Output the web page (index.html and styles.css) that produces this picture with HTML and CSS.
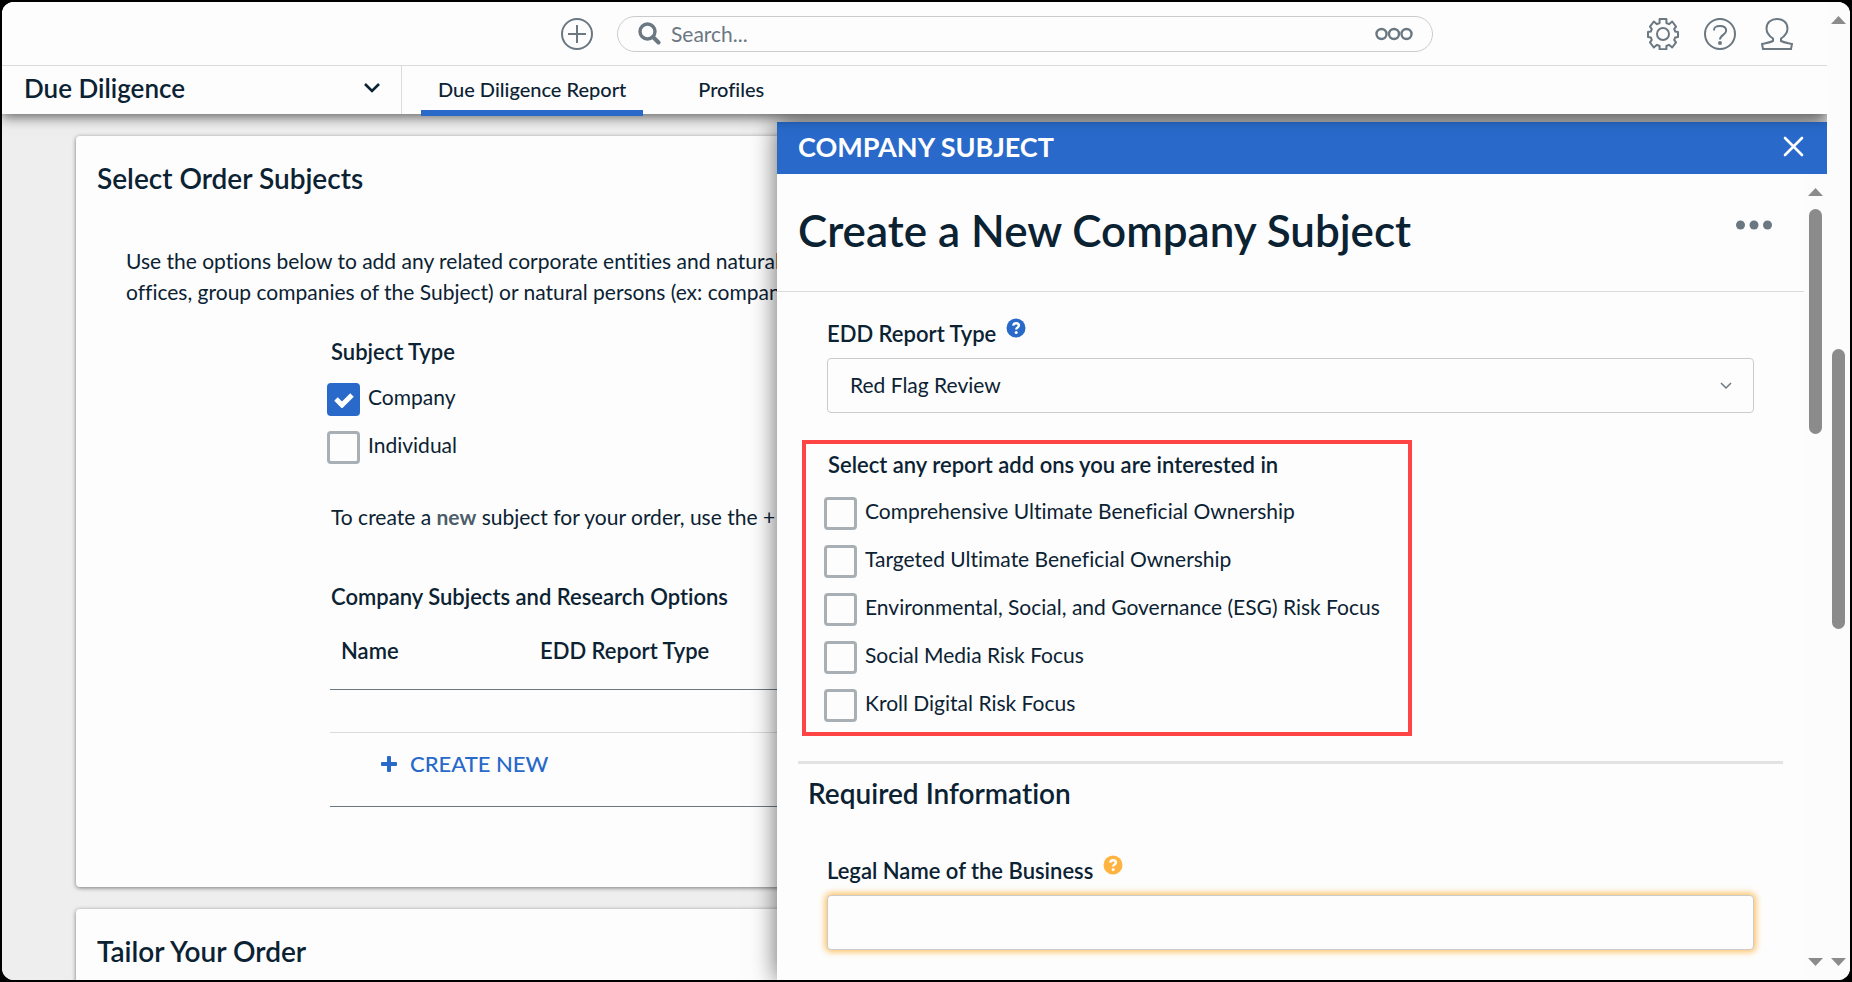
FILE: index.html
```
<!DOCTYPE html>
<html lang="en">
<head>
    <meta charset="UTF-8">
    <meta name="viewport" content="width=device-width, initial-scale=1.0">
    <title>Due Diligence Report</title>
    <link rel="stylesheet" href="styles.css">
</head>
<body>
    <div class="window">
        <div class="page">
            <header class="topbar">
                <button type="button" class="icon-btn" aria-label="Add">
                    <svg width="32" height="32" viewBox="0 0 32 32" fill="none" stroke="currentColor" stroke-width="2">
                        <circle cx="16" cy="16" r="15"/>
                        <path d="M16 7v18M7 16h18"/>
                    </svg>
                </button>
                <div class="search">
                    <svg width="23" height="23" viewBox="0 0 23 23" fill="none" stroke="currentColor">
                        <circle cx="9.5" cy="9.5" r="7.5" stroke-width="3.4"/>
                        <path d="M15 15l5.5 5.5" stroke-width="4" stroke-linecap="round"/>
                    </svg>
                    <input type="text" placeholder="Search..." aria-label="Search">
                    <button type="button" class="icon-btn" aria-label="Search options">
                        <svg width="38" height="14" viewBox="0 0 38 14" fill="none" stroke="currentColor" stroke-width="2.4">
                            <circle cx="6.5" cy="7" r="5"/>
                            <circle cx="19" cy="7" r="5"/>
                            <circle cx="31.5" cy="7" r="5"/>
                        </svg>
                    </button>
                </div>
                <div class="tools">
                    <button type="button" class="icon-btn" aria-label="Settings">
                        <svg width="32" height="32" viewBox="0 0 32 32" fill="none" stroke="currentColor" stroke-width="2" stroke-linejoin="round">
                            <path d="M12.6 1h6.800v4l2.600 1.200 3.200-2.700 3.800 5.200-1.800 2.500 1 2.300 2.800.6v4.800l-2.800.6-1 2.300 1.800 2.500-3.800 5.200-3.200-2.700-2.600 1.200v3.200h-6.800v-3.200L10 26.800l-3.200 2.700L3 24.300l1.800-2.500-1-2.300L1 18.900v-4.800l2.800-.6 1-2.300L3 8.700l3.800-5.200L10 6.200 12.600 5z"/>
                            <circle cx="16" cy="16" r="6"/>
                        </svg>
                    </button>
                    <button type="button" class="icon-btn" aria-label="Help">
                        <svg width="32" height="32" viewBox="0 0 32 32" fill="none" stroke="currentColor" stroke-width="2">
                            <circle cx="16" cy="16" r="15"/>
                            <path d="M10 12.5C10 8.500 12.500 8 16 8s6.200 1.500 6.200 4.600c0 4.300-6.200 4.300-6.200 9"/>
                            <circle cx="16" cy="25" r="1" fill="currentColor"/>
                        </svg>
                    </button>
                    <button type="button" class="icon-btn" aria-label="Account">
                        <svg width="32" height="32" viewBox="0 0 32 32" fill="none" stroke="currentColor" stroke-width="2">
                            <path d="M12 23v-2.500C8 18 5.500 15 5.500 10.500 5.500 4.500 10 1 16 1s10.500 3.500 10.500 9.500C26.500 15 24 18 20 20.500V23c3 1.500 7 2 11 3l-1 5H2l-1-5c4-1 8-1.500 11-3z"/>
                        </svg>
                    </button>
                </div>
            </header>

            <nav class="navbar">
                <button type="button" class="app-menu">
                    Due Diligence
                    <svg width="16" height="10" viewBox="0 0 16 10" fill="none" stroke="currentColor" stroke-width="2.6">
                        <path d="M1 1l7 7 7-7"/>
                    </svg>
                </button>
                <a href="#report" class="tab active">Due Diligence Report</a>
                <a href="#profiles" class="tab">Profiles</a>
            </nav>

            <main class="content">
                <section class="card card-collapsed"></section>

                <section class="card" id="report">
                    <h2>Select Order Subjects</h2>
                    <p class="intro">Use the options below to add any related corporate entities and natural persons<br>
                        offices, group companies of the Subject) or natural persons (ex: company directors)</p>

                    <div class="subjects">
                        <fieldset>
                            <legend>Subject Type</legend>
                            <label class="check"><input type="checkbox" checked>Company</label>
                            <label class="check"><input type="checkbox">Individual</label>
                        </fieldset>

                        <p class="hint">To create a <strong>new</strong> subject for your order, use the + button</p>

                        <h3>Company Subjects and Research Options</h3>
                        <table>
                            <thead>
                                <tr><th class="col-name">Name</th><th>EDD Report Type</th></tr>
                            </thead>
                            <tbody>
                                <tr class="empty"><td colspan="2"></td></tr>
                                <tr class="create">
                                    <td colspan="2">
                                        <a href="#company-subject">
                                            <svg width="16" height="16" viewBox="0 0 16 16" fill="currentColor">
                                                <rect x="6" y="0" width="4" height="16" rx="1"/>
                                                <rect x="0" y="6" width="16" height="4" rx="1"/>
                                            </svg>
                                            CREATE NEW
                                        </a>
                                    </td>
                                </tr>
                            </tbody>
                        </table>
                    </div>
                </section>

                <section class="card">
                    <h2>Tailor Your Order</h2>
                </section>
            </main>

            <aside class="panel" id="company-subject">
                <div class="panel-header">
                    <h2>COMPANY SUBJECT</h2>
                    <button type="button" class="icon-btn close" aria-label="Close">
                        <svg width="21" height="21" viewBox="0 0 21 21" fill="none" stroke="currentColor" stroke-width="2.6" stroke-linecap="round">
                            <path d="M2 2l17 17M19 2L2 19"/>
                        </svg>
                    </button>
                </div>
                <div class="panel-body">
                    <div class="panel-scroll">
                        <div class="panel-title">
                            <h1>Create a New Company Subject</h1>
                            <button type="button" class="icon-btn" aria-label="More actions">
                                <svg width="36" height="10" viewBox="0 0 36 10" fill="currentColor">
                                    <circle cx="4.5" cy="5" r="4.5"/>
                                    <circle cx="18" cy="5" r="4.5"/>
                                    <circle cx="31.5" cy="5" r="4.5"/>
                                </svg>
                            </button>
                        </div>

                        <form>
                            <div class="form-group">
                                <label for="reportType">EDD Report Type
                                    <svg class="help" width="20" height="20" viewBox="0 0 20 20" fill="none">
                                        <circle cx="10" cy="10" r="9.5" fill="currentColor"/>
                                        <path d="M7.2 7.600C7.500 5.900 8.700 5.200 10.100 5.200c1.600 0 2.800 1 2.800 2.300 0 2-2.700 2-2.700 4" stroke="#fff" stroke-width="2.4"/>
                                        <circle cx="10.2" cy="14.6" r="1.5" fill="#fff"/>
                                    </svg>
                                </label>
                                <select id="reportType">
                                    <option>Red Flag Review</option>
                                </select>
                            </div>

                            <fieldset class="addons">
                                <legend>Select any report add ons you are interested in</legend>
                                <label class="check"><input type="checkbox">Comprehensive Ultimate Beneficial Ownership</label>
                                <label class="check"><input type="checkbox">Targeted Ultimate Beneficial Ownership</label>
                                <label class="check"><input type="checkbox">Environmental, Social, and Governance (ESG) Risk Focus</label>
                                <label class="check"><input type="checkbox">Social Media Risk Focus</label>
                                <label class="check"><input type="checkbox">Kroll Digital Risk Focus</label>
                            </fieldset>

                            <hr>
                            <h2>Required Information</h2>

                            <div class="form-group required">
                                <label for="legalName">Legal Name of the Business
                                    <svg class="help" width="20" height="20" viewBox="0 0 20 20" fill="none">
                                        <circle cx="10" cy="10" r="9.5" fill="currentColor"/>
                                        <path d="M7.2 7.600C7.500 5.900 8.700 5.200 10.100 5.200c1.600 0 2.800 1 2.800 2.300 0 2-2.700 2-2.700 4" stroke="#fff" stroke-width="2.4"/>
                                        <circle cx="10.2" cy="14.6" r="1.5" fill="#fff"/>
                                    </svg>
                                </label>
                                <input type="text" id="legalName">
                            </div>
                        </form>
                    </div>
                    <div class="scrollbar panel-scrollbar">
                        <span class="arrow-up"></span>
                        <div class="track"><div class="thumb"></div></div>
                        <span class="arrow-down"></span>
                    </div>
                </div>
            </aside>
        </div>

        <div class="scrollbar page-scrollbar">
            <span class="arrow-up"></span>
            <div class="track"><div class="thumb"></div></div>
            <span class="arrow-down"></span>
        </div>
    </div>
</body>
</html>
```
FILE: styles.css
```
* {
    box-sizing: border-box;
}

body {
    margin: 0;
    padding: 2px;
    height: 100vh;
    background-color: #000;
    color: #0b2233;
    font-family: Lato, "Open Sans", sans-serif;
    font-size: 21px;
    line-height: 31px;
    font-variant-ligatures: none;
}

h1, h2, h3, p, fieldset, legend {
    margin: 0;
    padding: 0;
    border: none;
}

h1 {
    font-size: 44px;
    line-height: 50px;
    font-weight: 600;
}

h2 {
    font-size: 28px;
    line-height: 36px;
    font-weight: 600;
}

h3, legend, th {
    font-size: 22px;
    line-height: 31px;
    font-weight: 600;
    text-align: left;
}

button, input, select {
    font-family: inherit;
    font-size: 21px;
    color: inherit;
}

.icon-btn {
    display: flex;
    padding: 0;
    border: none;
    background: none;
    color: #6b7882;
    cursor: pointer;
}

.window {
    display: flex;
    height: 100%;
    border-radius: 12px;
    overflow: hidden;
    background-color: #fdfdfd;
}

.page {
    flex: 1;
    min-width: 0;
    position: relative;
    display: flex;
    flex-direction: column;
    overflow: hidden;
    background-color: #eee;
}

/* Top bar */
.topbar {
    flex: none;
    display: flex;
    align-items: center;
    height: 64px;
    padding: 0 34px 0 559px;
    background-color: #fdfdfd;
    border-bottom: 1px solid #d9dbdd;
    position: relative;
    z-index: 3;
}

.search {
    flex: 1;
    max-width: 816px;
    height: 36px;
    margin-left: 24px;
    padding: 0 19px 0 20px;
    display: flex;
    align-items: center;
    gap: 10px;
    border: 1px solid #c9cbcd;
    border-radius: 18px;
    color: #6b7882;
}

.search input {
    flex: 1;
    min-width: 0;
    padding: 0;
    border: none;
    outline: none;
    background: none;
}

.search input::placeholder {
    color: #6b7882;
    opacity: 1;
}

.tools {
    display: flex;
    gap: 25px;
    margin-left: auto;
}

.navbar {
    flex: none;
    display: flex;
    height: 48px;
    background-color: #fdfdfd;
    box-shadow: 0 3px 12px rgba(0, 0, 0, 0.6);
    position: relative;
    z-index: 2;
}

.app-menu {
    width: 400px;
    display: flex;
    align-items: center;
    justify-content: space-between;
    margin-right: 19px;
    padding: 0 21px 4px 22px;
    border: none;
    border-right: 1px solid #d9dbdd;
    background: none;
    font-size: 26px;
    font-weight: 600;
    cursor: pointer;
}

.tab {
    height: 50px;
    margin-right: 38px;
    padding: 8px 17px 0;
    border-bottom: 6px solid transparent;
    color: #0b2233;
    font-size: 20px;
    font-weight: 500;
    text-decoration: none;
}

.tab.active {
    border-color: #2869c9;
}

/* Cards */
.content {
    display: flex;
    flex-direction: column;
    gap: 22px;
    padding: 0 73px 0 74px;
}

.card {
    flex: none;
    padding: 24px 21px 80px;
    background-color: #fdfdfd;
    border-radius: 4px;
    box-shadow: 0 1px 4px rgba(0, 0, 0, 0.5);
}

.card-collapsed {
    padding: 0;
}

.intro {
    margin: 49px 0 29px 29px;
    white-space: nowrap;
}

.subjects {
    margin-left: 234px;
}

legend {
    margin-bottom: 14px;
}

.check {
    display: flex;
    align-items: flex-start;
    gap: 8px;
    margin: 0 0 13px -4px;
}

.check input {
    appearance: none;
    flex: none;
    width: 33px;
    height: 33px;
    margin: 2px 0 0;
    border: 3px solid #a8afb5;
    border-radius: 4px;
    background-color: #fdfdfd;
}

.check input:checked {
    border-color: #2869c9;
    background: #2869c9 url("data:image/svg+xml,%3Csvg xmlns='http://www.w3.org/2000/svg' width='20' height='16' fill='none' stroke='white' stroke-width='5'%3E%3Cpath d='M2 7l6 6L18 3'/%3E%3C/svg%3E") no-repeat center;
}

.hint {
    margin: 24px 0 49px;
    white-space: nowrap;
}

.hint strong {
    font-weight: 700;
    color: #4d5d69;
}

table {
    width: 100%;
    margin-left: -1px;
    border-collapse: collapse;
}

th {
    padding: 23px 11px;
    border-bottom: 1px solid #6b7882;
}

.col-name {
    width: 199px;
}

.empty td {
    height: 43px;
    padding: 0;
    border-bottom: 1px solid #d9dbdd;
}

.create td {
    padding: 15px 51px 27px;
    border-bottom: 1px solid #6b7882;
}

.create a {
    display: flex;
    align-items: center;
    gap: 13px;
    color: #2869c9;
    font-size: 22px;
    font-weight: 500;
    text-decoration: none;
}

/* Slide-out panel */
.panel {
    position: absolute;
    top: 120px;
    right: 0;
    bottom: 0;
    width: calc(100% - 775px);
    display: flex;
    flex-direction: column;
    background-color: #fdfdfd;
    box-shadow: 0 0 24px rgba(0, 0, 0, 0.6);
    z-index: 1;
}

.panel-header {
    flex: none;
    display: flex;
    align-items: center;
    justify-content: space-between;
    height: 52px;
    padding: 0 23px 3px 21px;
    background-color: #2869c9;
    color: #fff;
}

.panel-header h2 {
    font-size: 27px;
    font-weight: 700;
}

.close {
    color: #fff;
}

.panel-body {
    flex: 1;
    min-height: 0;
    display: flex;
}

.panel-scroll {
    flex: 1;
    min-width: 0;
    overflow: hidden;
}

.panel-title {
    display: flex;
    align-items: flex-start;
    justify-content: space-between;
    padding: 31px 32px 36px 21px;
    border-bottom: 1px solid #d9dbdd;
}

.panel-title .icon-btn {
    margin-top: 15px;
}

form {
    padding-top: 26px;
}

.form-group {
    margin: 0 50px;
}

.form-group label {
    display: flex;
    gap: 10px;
    margin-bottom: 9px;
    font-size: 22px;
    font-weight: 600;
}

.help {
    color: #2869c9;
}

.form-group select,
.form-group input {
    display: block;
    width: 100%;
    height: 55px;
    padding: 0 22px 3px;
    border: 1px solid #c9cbcd;
    border-radius: 4px;
    background-color: #fdfdfd;
}

.form-group select {
    appearance: none;
    background-image: url("data:image/svg+xml,%3Csvg xmlns='http://www.w3.org/2000/svg' width='12' height='8' fill='none' stroke='%236b7882' stroke-width='1.500'%3E%3Cpath d='M1 1l5 5 5-5'/%3E%3C/svg%3E");
    background-repeat: no-repeat;
    background-position: right 21px center;
}

.addons {
    width: fit-content;
    margin: 27px 0 25px 25px;
    padding: 5px 28px 10px 22px;
    border: 4px solid #fe4444;
}

.addons legend {
    float: left;
    margin-bottom: 15px;
}

.addons .check {
    clear: both;
}

.addons .check:last-child {
    margin-bottom: 0;
}

hr {
    height: 3px;
    margin: 0 21px 11px;
    border: none;
    background-color: #e3e3e3;
}

form h2 {
    margin: 0 31px 44px;
}

.required .help {
    color: #ffb340;
}

.form-group.required input {
    box-shadow: 0 0 6px 2px #ffc060;
}

/* Scrollbars */
.scrollbar {
    flex: none;
    width: 23px;
    display: flex;
    flex-direction: column;
    align-items: center;
    padding: 14px 0;
    background-color: #fcfcfc;
}

.arrow-up,
.arrow-down {
    width: 15px;
    height: 8px;
    background-color: #8b8b8b;
    clip-path: polygon(50% 0, 100% 100%, 0 100%);
}

.arrow-down {
    clip-path: polygon(0 0, 100% 0, 50% 100%);
}

.track {
    flex: 1;
    width: 13px;
    padding-top: 13px;
}

.thumb {
    height: 30%;
    border-radius: 7px;
    background-color: #8b8b8b;
}

.page-scrollbar .track {
    padding-top: 325px;
}

.page-scrollbar .thumb {
    height: 46%;
}
```
